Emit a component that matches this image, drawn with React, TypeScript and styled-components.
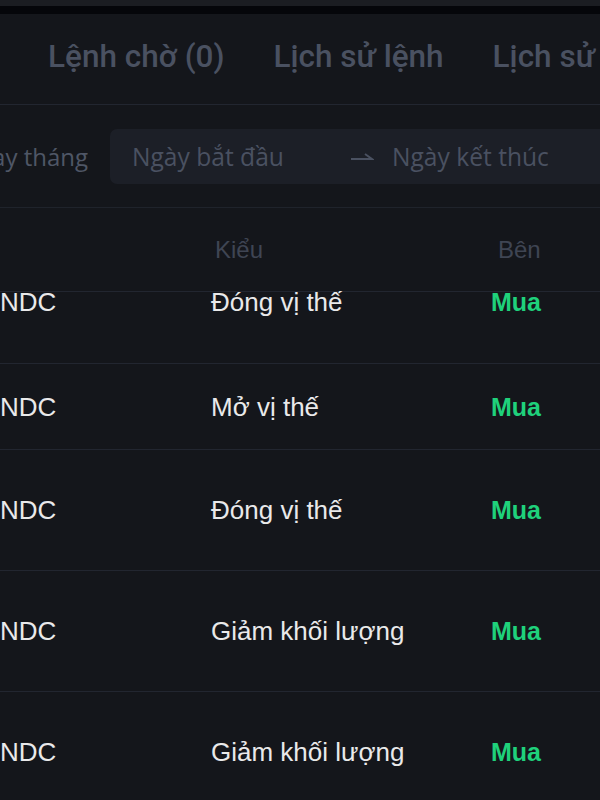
import React from "react";
import styled, { createGlobalStyle } from "styled-components";

const Global = createGlobalStyle`
  html, body { margin: 0; padding: 0; background: #14161b; overflow: hidden; }
  body { width: 600px; height: 800px; }
  #root { width: 600px; height: 800px; overflow: hidden; }
`;

const Page = styled.div`
  width: 600px;
  height: 800px;
  overflow: hidden;
  display: flex;
  flex-direction: column;
  background: #14161b;
`;

const TopBand = styled.div`
  height: 6px;
  background: #1b1d22;
  flex-shrink: 0;
`;

const BlackStrip = styled.div`
  height: 8px;
  background: #05060a;
  flex-shrink: 0;
`;

const Tabs = styled.div`
  height: 90px;
  flex-shrink: 0;
  display: flex;
  align-items: center;
  gap: 49px;
  padding-left: 48px;
  border-bottom: 1px solid #222630;
  white-space: nowrap;
  overflow: hidden;
`;

const Tab = styled.div`
  font-family: Roboto, "Liberation Sans", sans-serif;
  font-weight: 500;
  font-size: 31.5px;
  color: #4a5161;
  line-height: 1;
  margin-top: -5px;
  flex-shrink: 0;
`;

const FilterRow = styled.div`
  height: 102px;
  flex-shrink: 0;
  display: flex;
  align-items: center;
  gap: 22px;
  border-bottom: 1px solid #1f232b;
  overflow: hidden;
`;

const FilterLabel = styled.div`
  width: 88px;
  flex-shrink: 0;
  display: flex;
  justify-content: flex-end;
  overflow: hidden;
  white-space: nowrap;
  font-family: "Open Sans", "Noto Sans", sans-serif;
  font-size: 24px;
  color: #4f5666;
`;

const RangeInput = styled.div`
  flex-shrink: 0;
  width: 560px;
  height: 55px;
  background: #1c1f27;
  border-radius: 7px;
  display: flex;
  align-items: center;
  padding-left: 22px;
  box-sizing: border-box;
  font-family: "Open Sans", "Noto Sans", sans-serif;
  font-size: 24.6px;
  color: #4a5161;
  white-space: nowrap;
`;

const Placeholder = styled.span<{ $w: number }>`
  width: ${(p) => p.$w}px;
  flex-shrink: 0;
`;

const ArrowBox = styled.span`
  width: 42px;
  flex-shrink: 0;
  display: flex;
  align-items: center;
`;

const HeaderRow = styled.div`
  height: 83px;
  flex-shrink: 0;
  display: grid;
  grid-template-columns: 211px 280px 1fr;
  align-items: center;
  border-bottom: 1px solid #222630;
`;

const HeadCell = styled.div<{ $pad: number }>`
  padding-left: ${(p) => p.$pad}px;
  font-family: "Liberation Sans", Arial, sans-serif;
  font-size: 24px;
  color: #3f4553;
`;

const Row = styled.div<{ $h: number; $top?: boolean }>`
  height: ${(p) => p.$h}px;
  flex-shrink: 0;
  display: grid;
  grid-template-columns: 211px 280px 1fr;
  align-items: ${(p) => (p.$top ? "start" : "center")};
  border-bottom: 1px solid #222630;
  box-sizing: border-box;
`;

const Cell = styled.div<{ $buy?: boolean }>`
  font-family: "Liberation Sans", Arial, sans-serif;
  font-size: ${(p) => (p.$buy ? 25 : 26)}px;
  line-height: 20px;
  white-space: nowrap;
  color: ${(p) => (p.$buy ? "#1fd17b" : "#e9e9ea")};
  font-weight: ${(p) => (p.$buy ? 600 : 400)};
`;

const Arrow = () => (
  <svg width="24" height="12" viewBox="0 0 24 12">
    <path d="M1 9 H22 L15 4" fill="none" stroke="#4a5161" strokeWidth="2" />
  </svg>
);

const rows = [
  { h: 72, top: true, type: "Đóng vị thế" },
  { h: 86, type: "Mở vị thế" },
  { h: 121, type: "Đóng vị thế" },
  { h: 121, type: "Giảm khối lượng" },
  { h: 121, type: "Giảm khối lượng" },
];

export default function App() {
  return (
    <Page>
      <Global />
      <TopBand />
      <BlackStrip />
      <Tabs>
        <Tab>Lệnh chờ (0)</Tab>
        <Tab>Lịch sử lệnh</Tab>
        <Tab>Lịch sử giao dịch</Tab>
      </Tabs>
      <FilterRow>
        <FilterLabel>Theo ngay tháng</FilterLabel>
        <RangeInput>
          <Placeholder $w={218}>Ngày bắt đầu</Placeholder>
          <ArrowBox>
            <Arrow />
          </ArrowBox>
          <Placeholder $w={200}>Ngày kết thúc</Placeholder>
        </RangeInput>
      </FilterRow>
      <HeaderRow>
        <HeadCell $pad={0} />
        <HeadCell $pad={4}>Kiểu</HeadCell>
        <HeadCell $pad={7}>Bên</HeadCell>
      </HeaderRow>
      {rows.map((r, i) => (
        <Row key={i} $h={r.h} $top={r.top}>
          <Cell>NDC</Cell>
          <Cell>{r.type}</Cell>
          <Cell $buy>Mua</Cell>
        </Row>
      ))}
    </Page>
  );
}
